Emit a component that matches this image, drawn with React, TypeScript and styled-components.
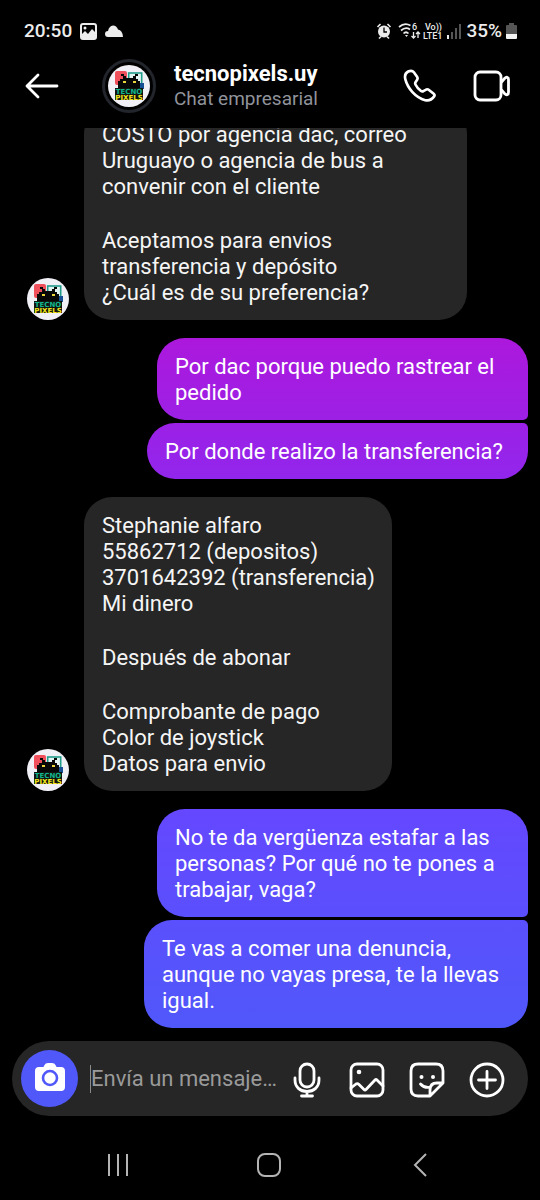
import React from "react";
import styled, { createGlobalStyle } from "styled-components";

const GlobalStyle = createGlobalStyle`
  * { box-sizing: border-box; }
  body {
    margin: 0;
    background: #000;
    color: #f5f5f5;
    font-family: Roboto, "Liberation Sans", sans-serif;
    font-size: 22px;
    line-height: 26px;
  }
  svg { display: block; }
`;

const Screen = styled.div`
  display: flex;
  flex-direction: column;
  height: 100vh;
  overflow: hidden;
`;

const StatusBar = styled.div`
  display: flex;
  align-items: center;
  justify-content: space-between;
  flex: none;
  height: 44px;
  padding: 18px 23px 0 24px;
  font-size: 19px;
  font-weight: 500;
  color: #ececec;
`;

const StatusGroup = styled.div<{ $gap: number }>`
  display: flex;
  align-items: center;
  gap: ${(p) => p.$gap}px;
`;

const Header = styled.header`
  display: flex;
  align-items: center;
  flex: none;
  height: 84px;
  padding: 0 29px 0 24px;
`;

const IconButton = styled.button`
  display: grid;
  place-items: center;
  flex: none;
  padding: 0;
  border: 0;
  background: none;
  color: #fff;
  cursor: pointer;
`;

const Ring = styled.div`
  display: grid;
  place-items: center;
  flex: none;
  width: 54px;
  height: 54px;
  margin: 0 18px 0 42px;
  border: 3px solid #23252c;
  border-radius: 50%;
`;

const Identity = styled.div`
  flex: 1;
  min-width: 0;
`;

const Name = styled.h1`
  margin: 0;
  font-size: 22px;
  line-height: 26px;
  font-weight: 700;
  color: #fff;
`;

const Subtitle = styled.p`
  margin: 0;
  font-size: 19px;
  line-height: 24px;
  color: #90939b;
`;

const Calls = styled.div`
  display: flex;
  gap: 36px;
`;

const Thread = styled.main`
  display: flex;
  flex-direction: column;
  justify-content: flex-end;
  flex: 1;
  gap: 18px;
  min-height: 0;
  overflow: hidden;
  padding: 0 12px 13px 27px;
`;

const Received = styled.div`
  display: flex;
  align-items: flex-end;
  gap: 15px;
`;

const Sent = styled.div`
  display: flex;
  flex-direction: column;
  align-items: flex-end;
  gap: 3px;
`;

const Bubble = styled.div<{ $width: number }>`
  display: flex;
  flex-direction: column;
  gap: 28px;
  width: ${(p) => p.$width}px;
  max-width: 100%;
  padding: 16px 0 14px 18px;
  border-radius: 28px;
  background: #262626;
  white-space: pre-line;

  ${Sent} & {
    color: #fff;
    background: linear-gradient(#ac18dc 28%, #9226ec 40%, #6547ff 67%, #5058fa 86%) fixed;
  }
  ${Sent} &:first-child { border-bottom-right-radius: 5px; }
  ${Sent} &:last-child { border-top-right-radius: 5px; }
`;

const Paragraph = styled.p`
  margin: 0;
`;

const Composer = styled.form`
  display: flex;
  align-items: center;
  flex: none;
  height: 75px;
  margin: 0 12px;
  padding: 0 23px 0 9px;
  border-radius: 38px;
  background: #262626;
`;

const CameraButton = styled(IconButton)`
  width: 57px;
  height: 57px;
  margin-right: 12px;
  padding-bottom: 3px;
  border-radius: 50%;
  background: #5058fa;
`;

const MessageInput = styled.input`
  flex: 1;
  min-width: 0;
  height: 28px;
  padding: 0;
  border: 0;
  border-left: 1px solid #8a8a8a;
  outline: 0;
  background: none;
  color: #f5f5f5;
  font: inherit;
  &::placeholder { color: #9a9a9a; opacity: 1; }
`;

const Tools = styled.div`
  display: flex;
  gap: 24px;
  padding-top: 2px;
`;

const NavBar = styled.nav`
  display: grid;
  grid-template-columns: repeat(3, 1fr);
  place-items: center;
  flex: none;
  height: 84px;
  padding: 14px 44px 0 42px;
`;

const Logo = ({ size }: { size: number }) => (
  <svg width={size} height={size} viewBox="0 0 42 42" role="img" aria-label="Tecno Pixels">
    <circle cx="21" cy="21" r="21" fill="#f1f0f7" />
    <rect x="7" y="6" width="12" height="14" rx="2" fill="#f0505c" />
    <rect x="20.700" y="8" width="13" height="13" fill="#e4f4f2" stroke="#219c8a" strokeWidth="1.600" />
    <rect x="31" y="18" width="5" height="6" fill="#174f94" />
    <path d="M13 9h3v2h2v2h7v-2h2V9h3v2h-2v3h2v2h2v8H10v-8h2v-2h3v-3h-2z" fill="#080808" />
    <path d="M15 16h3v2h-3zM25 16h3v2h-3z" fill="#e9d53a" />
    <rect x="7" y="23" width="28" height="12" fill="#101510" />
    <g textAnchor="middle" fontFamily="DejaVu Sans, sans-serif" fontWeight="700" fontSize="7">
      <text x="21" y="29" fill="#10b58d">TECNO</text>
      <text x="21" y="35" fill="#f4e51c">PIXELS</text>
    </g>
  </svg>
);

const line = { fill: "none", stroke: "currentColor", strokeLinecap: "round", strokeLinejoin: "round" } as const;

export default function App() {
  return (
    <Screen>
      <GlobalStyle />
      <StatusBar>
        <StatusGroup $gap={8}>
          <span>20:50</span>
          <svg width="17" height="17" viewBox="0 0 17 17">
            <rect x="1" y="1" width="15" height="15" rx="2" fill="none" stroke="#ececec" strokeWidth="2" />
            <circle cx="5" cy="5" r="1.500" fill="#ececec" />
            <path d="M1 12l4-4 3 3 4-5 4 4v6H1z" fill="#ececec" />
          </svg>
          <svg width="18" height="12" viewBox="0 0 18 12">
            <path d="M3 12a3 3 0 0 1 0-6Q4 1 8 0.500 11.500 0.500 13 4.500 17.500 5 18 12z" fill="#ececec" />
          </svg>
        </StatusGroup>
        <StatusGroup $gap={4}>
          <svg width="67" height="18" viewBox="0 0 67 18" fill="none" stroke="#ececec">
            <g transform="translate(0 1)">
              <circle cx="8" cy="8.500" r="6" fill="#ececec" stroke="none" />
              <path d="M1.500 4l3-3M14.500 4l-3-3M3 15.500l2-2M13 15.500l-2-2" strokeWidth="1.600" />
              <path d="M8 4.500V9h3" stroke="#000" strokeWidth="1.300" />
            </g>
            <path d="M23 5q5.500-5 11.500-1.500M25 8.500q4.500-4 9-1M27.500 11.500q2.500-2.500 5 0" strokeWidth="1.700" />
            <path d="M29 13h3l-1.500 2z" fill="#ececec" stroke="none" />
            <path d="M37.500 10v6M35.500 14l2 2 2-2M42 16v-6M40 12l2-2 2 2" strokeWidth="1.300" />
            <g fill="#ececec" stroke="none" fontFamily="Roboto, sans-serif" fontWeight="500">
              <text x="36" y="8" fontSize="9">6</text>
              <text x="49" y="8" fontSize="9">Vo))</text>
              <text x="47" y="17" fontSize="9">LTE1</text>
            </g>
          </svg>
          <svg width="15" height="16" viewBox="0 0 15 16">
            <path d="M0 12h2v4H0z" fill="#ececec" />
            <path d="M4 9h2v7H4zM8 5h2v11H8zM12 1h2v15h-2z" fill="#555" />
          </svg>
          <span>35%</span>
          <svg width="11" height="16" viewBox="0 0 11 16">
            <path d="M3 0h5v2h2q1 0 1 1v8H0V3q0-1 1-1h2z" fill="#555" />
            <path d="M0 11h11v4q0 1-1 1H1q-1 0-1-1z" fill="#f4f4f4" />
          </svg>
        </StatusGroup>
      </StatusBar>

      <Header>
        <IconButton aria-label="Volver">
          <svg width="36" height="26" viewBox="0 0 36 26" {...line} strokeWidth="2.800">
            <path d="M33 13H3M14 2L3 13l11 11" />
          </svg>
        </IconButton>
        <Ring><Logo size={42} /></Ring>
        <Identity>
          <Name>tecnopixels.uy</Name>
          <Subtitle>Chat empresarial</Subtitle>
        </Identity>
        <Calls>
          <IconButton aria-label="Llamar">
            <svg width="34" height="34" viewBox="0 0 36 36" {...line} strokeWidth="2.800">
              <path d="M5.500 2.700C2 4.500 1.500 7 2.500 11c2.500 9.500 10.500 19 21 22 4 1 7-.5 9.500-4 .8-1.200.5-2-.5-2.800l-5-4c-1.200-1-2.300-1-3.500-.2l-2.500 1.500c-1 .5-1.800.3-2.700-.4-2.500-1.900-4.300-4-5.600-6.700-.5-1-.4-1.700.2-2.600l1.600-2.500c.7-1.100.6-2-.1-3.100L11.500 3.500c-1.500-2-4-1.800-6-.8z" />
            </svg>
          </IconButton>
          <IconButton aria-label="Videollamada">
            <svg width="38" height="32" viewBox="0 0 38 32" {...line} strokeWidth="2.800">
              <rect x="2" y="2" width="26" height="28" rx="5" />
              <path d="M28.500 12l3-3.500c2-2 4-1.500 4 1.200v12.600c0 2.700-2 3.200-4 1.200l-3-3.500" />
            </svg>
          </IconButton>
        </Calls>
      </Header>

      <Thread>
        <Received>
          <Logo size={42} />
          <Bubble $width={383}>
            <Paragraph>{"COSTO por agencia dac, correo\nUruguayo o agencia de bus a\nconvenir con el cliente"}</Paragraph>
            <Paragraph>{"Aceptamos para envios\ntransferencia y depósito\n¿Cuál es de su preferencia?"}</Paragraph>
          </Bubble>
        </Received>
        <Sent>
          <Bubble $width={371}><Paragraph>{"Por dac porque puedo rastrear el\npedido"}</Paragraph></Bubble>
          <Bubble $width={381}><Paragraph>Por donde realizo la transferencia?</Paragraph></Bubble>
        </Sent>
        <Received>
          <Logo size={42} />
          <Bubble $width={308}>
            <Paragraph>{"Stephanie alfaro\n55862712 (depositos)\n3701642392 (transferencia)\nMi dinero"}</Paragraph>
            <Paragraph>Después de abonar</Paragraph>
            <Paragraph>{"Comprobante de pago\nColor de joystick\nDatos para envio"}</Paragraph>
          </Bubble>
        </Received>
        <Sent>
          <Bubble $width={371}><Paragraph>{"No te da vergüenza estafar a las\npersonas? Por qué no te pones a\ntrabajar, vaga?"}</Paragraph></Bubble>
          <Bubble $width={384}><Paragraph>{"Te vas a comer una denuncia,\naunque no vayas presa, te la llevas\nigual."}</Paragraph></Bubble>
        </Sent>
      </Thread>

      <Composer onSubmit={(e) => e.preventDefault()}>
        <CameraButton type="button" aria-label="Cámara">
          <svg width="32" height="28" viewBox="0 0 32 28">
            <path d="M10.500 2Q11.500 0 14 0h4q2.500 0 3.500 2l1 2H27q4 0 4 4v16q0 4-4 4H5q-4 0-4-4V8q0-4 4-4h4.500z" fill="#fff" />
            <circle cx="16" cy="15" r="7" fill="none" stroke="#5058fa" strokeWidth="2.600" />
          </svg>
        </CameraButton>
        <MessageInput aria-label="Mensaje" placeholder="Envía un mensaje…" />
        <Tools>
          <IconButton type="button" aria-label="Nota de voz">
            <svg width="36" height="36" viewBox="0 0 36 36" {...line} strokeWidth="2.800">
              <rect x="11" y="2" width="14" height="23" rx="7" />
              <path d="M6 16v2c0 7 5 11.500 12 11.500S30 25 30 18v-2M18 30v4M12.500 34h11" />
            </svg>
          </IconButton>
          <IconButton type="button" aria-label="Foto">
            <svg width="36" height="36" viewBox="0 0 36 36" {...line} strokeWidth="2.800">
              <rect x="2" y="2" width="32" height="32" rx="6" />
              <circle cx="10" cy="10" r="2.300" fill="currentColor" stroke="none" />
              <path d="M2 26l5-4q1.500-1 3 .5l5 5q1 1 2 0l9-9.500q1-1 2 0l6 6" />
            </svg>
          </IconButton>
          <IconButton type="button" aria-label="Sticker">
            <svg width="36" height="36" viewBox="0 0 36 36" {...line} strokeWidth="2.800">
              <path d="M21 34H9q-7 0-7-7V9q0-7 7-7h18q7 0 7 7v12L21 34v-6q0-7 7-7h6M11.500 22q3.500 4 9 3.300" />
              <circle cx="12.500" cy="15" r="2" fill="currentColor" stroke="none" />
              <circle cx="24" cy="15" r="2" fill="currentColor" stroke="none" />
            </svg>
          </IconButton>
          <IconButton type="button" aria-label="Más">
            <svg width="36" height="36" viewBox="0 0 36 36" {...line} strokeWidth="2.800">
              <circle cx="18" cy="18" r="16" />
              <path d="M18 9.500v17M9.500 18h17" />
            </svg>
          </IconButton>
        </Tools>
      </Composer>

      <NavBar>
        <IconButton aria-label="Recientes">
          <svg width="24" height="24" viewBox="0 0 24 24" stroke="#b4b4b4" strokeWidth="2">
            <path d="M3 1v22M12 1v22M21 1v22" />
          </svg>
        </IconButton>
        <IconButton aria-label="Inicio">
          <svg width="24" height="24" viewBox="0 0 24 24" fill="none" stroke="#b4b4b4" strokeWidth="2">
            <rect x="1" y="1" width="22" height="22" rx="7" />
          </svg>
        </IconButton>
        <IconButton aria-label="Atrás">
          <svg width="14" height="24" viewBox="0 0 14 24" fill="none" stroke="#b4b4b4" strokeWidth="2">
            <path d="M13 1L2 12l11 11" />
          </svg>
        </IconButton>
      </NavBar>
    </Screen>
  );
}
